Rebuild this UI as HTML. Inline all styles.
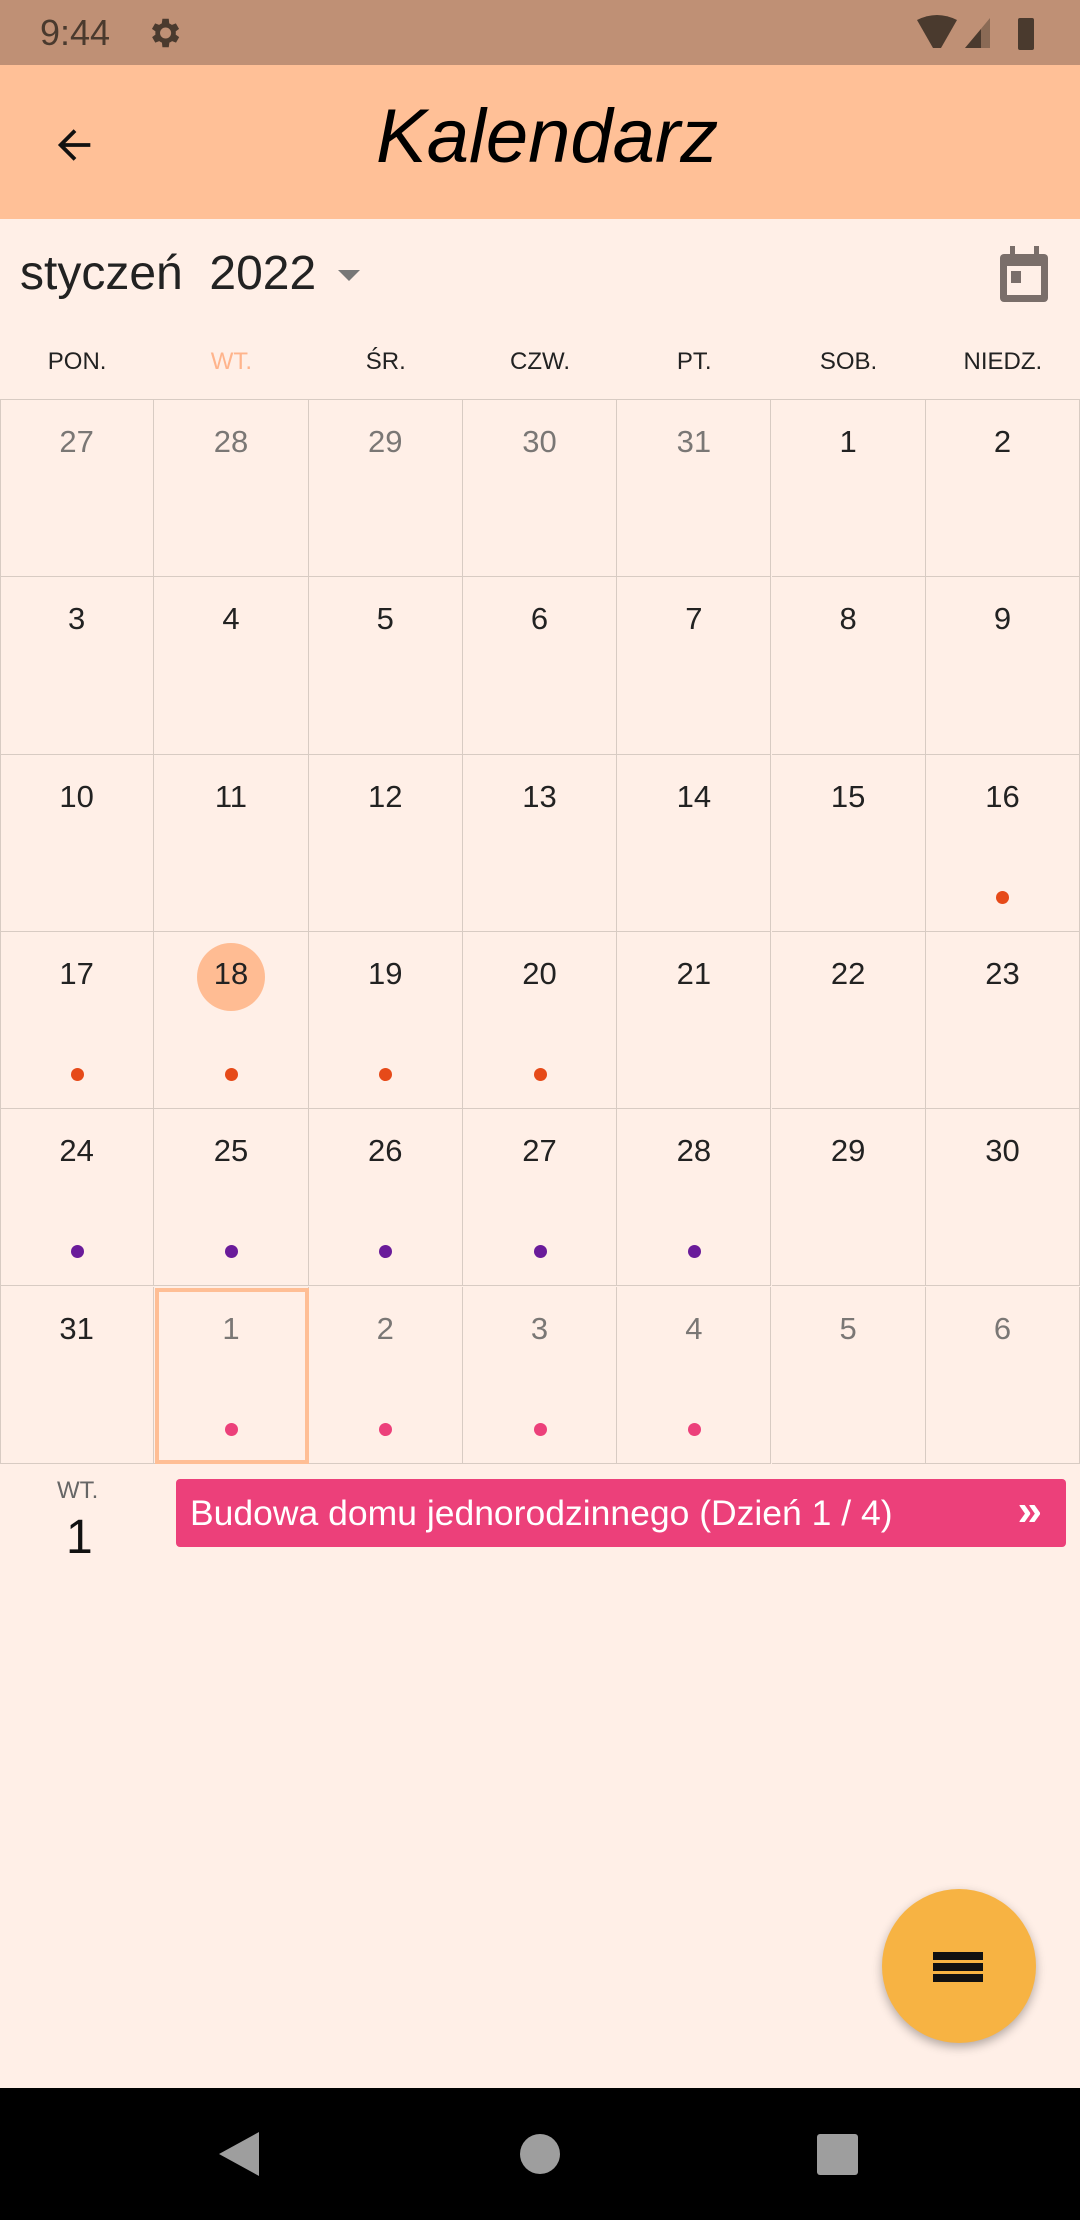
<!DOCTYPE html>
<html><head><meta charset="utf-8"><style>
*{margin:0;padding:0;box-sizing:border-box}
body{width:1080px;height:2220px;background:#FFEFE7;font-family:"Liberation Sans",sans-serif;position:relative;overflow:hidden}
.abs{position:absolute}
#sb{left:0;top:0;width:1080px;height:65px;background:#BF9075}
#ab{left:0;top:65px;width:1080px;height:154px;background:#FFC097}
.cell{position:absolute;width:154.3px;height:177.3px;border-right:1px solid #d8cbc3;border-bottom:1px solid #d8cbc3;text-align:center}
.num{position:absolute;left:0;right:0;top:24px;font-size:31px;color:#222}
.g{color:#7a7775}
.dot{position:absolute;left:50%;top:136px;width:13px;height:13px;margin-left:-6px;border-radius:50%}
.wd{position:absolute;top:348px;width:154.3px;text-align:center;font-size:24px;color:#222}
</style></head><body>
<div id="sb" class="abs">
<div class="abs" style="left:40px;top:12px;font-size:36px;color:#4a3a2e">9:44</div>
<svg class="abs" style="left:145px;top:14px" width="38" height="38" viewBox="0 0 24 24"><path fill="#4a3a2e" d="M19.4 13a7.5 7.5 0 0 0 0-2l2.1-1.6-2-3.5-2.5 1a7 7 0 0 0-1.7-1L15 3h-4l-.4 2.9a7 7 0 0 0-1.7 1l-2.5-1-2 3.5L6.6 11a7.5 7.5 0 0 0 0 2l-2.1 1.6 2 3.5 2.5-1a7 7 0 0 0 1.7 1L11 21h4l.4-2.9a7 7 0 0 0 1.7-1l2.5 1 2-3.5zM13 15.5a3.5 3.5 0 1 1 0-7 3.5 3.5 0 0 1 0 7z"/></svg>
<svg class="abs" style="left:915px;top:14px" width="130" height="38"><path d="M2 6 Q22 -4 42 6 L26 34 L18 34Z" fill="#4a3a2e"/><path d="M50 34 L75 4 L75 34Z" fill="#8a6a55"/><path d="M50 34 L66 15 L66 34Z" fill="#4a3a2e"/><rect x="103" y="4" width="16" height="32" rx="2" fill="#4a3a2e"/></svg>
</div>
<div id="ab" class="abs">
<svg class="abs" style="left:52px;top:57px" width="46" height="46" viewBox="0 0 24 24"><path d="M20 12H5M12 4.5L4.5 12 12 19.5" stroke="#111" stroke-width="2" fill="none"/></svg>
<div class="abs" style="left:376px;top:28px;font-size:76px;font-style:italic;font-family:'Comic Sans MS','Liberation Sans',sans-serif;color:#000">Kalendarz</div>
</div>
<div class="abs" style="left:20px;top:246px;font-size:48px;color:#222">styczeń&nbsp; 2022</div>
<div class="abs" style="left:338px;top:270px;width:0;height:0;border-left:11px solid transparent;border-right:11px solid transparent;border-top:11px solid #777"></div>
<svg class="abs" style="left:998px;top:244px" width="54" height="60" viewBox="0 0 54 60"><rect x="2" y="10" width="48" height="48" rx="4" fill="#7a6e6a"/><rect x="9" y="22" width="34" height="29" fill="#FFEFE7"/><rect x="12" y="2" width="5" height="10" fill="#7a6e6a"/><rect x="36" y="2" width="5" height="10" fill="#7a6e6a"/><rect x="13" y="27" width="10" height="12" fill="#7a6e6a"/></svg>
<div class="wd" style="left:0">PON.</div><div class="wd" style="left:154.3px;color:#FFB48C">WT.</div><div class="wd" style="left:308.6px">ŚR.</div><div class="wd" style="left:462.9px">CZW.</div><div class="wd" style="left:617.1px">PT.</div><div class="wd" style="left:771.4px">SOB.</div><div class="wd" style="left:925.7px">NIEDZ.</div>
<div class="abs" style="left:0;top:399px;width:1080px;height:1px;background:#d8cbc3"></div>
<div class="abs" style="left:0;top:399px;width:1px;height:1065px;background:#d8cbc3"></div>
<div id="grid"></div>
<div class="abs" style="left:155px;top:1288px;width:154px;height:176px;border:4px solid #FFBE95"></div>
<div class="abs" style="left:57px;top:1477px;font-size:24px;color:#666">WT.</div>
<div class="abs" style="left:66px;top:1510px;font-size:48px;color:#111">1</div>
<div class="abs" style="left:176px;top:1479px;width:890px;height:68px;background:#EC407A;border-radius:4px;color:#fff;font-size:35.5px;line-height:68px;padding-left:14px">Budowa domu jednorodzinnego (Dzień 1 / 4)<span style="position:absolute;right:24px;top:-2px;font-size:44px;font-weight:bold">»</span></div>
<div class="abs" style="left:882px;top:1889px;width:154px;height:154px;border-radius:50%;background:#F7B343;box-shadow:0 4px 10px rgba(0,0,0,.3)"></div>
<div class="abs" style="left:933px;top:1952px;width:50px;height:8px;background:#111"></div>
<div class="abs" style="left:933px;top:1963px;width:50px;height:8px;background:#111"></div>
<div class="abs" style="left:933px;top:1974px;width:50px;height:8px;background:#111"></div>
<div class="abs" style="left:0;top:2088px;width:1080px;height:132px;background:#000"></div>
<svg class="abs" style="left:215px;top:2130px" width="45" height="48"><path d="M44 2 L44 46 L4 24Z" fill="#9e9e9e"/></svg>
<div class="abs" style="left:520px;top:2134px;width:40px;height:40px;border-radius:50%;background:#9e9e9e"></div>
<div class="abs" style="left:817px;top:2134px;width:41px;height:41px;border-radius:3px;background:#9e9e9e"></div>
<script>
var rows=[[27,28,29,30,31,1,2],[3,4,5,6,7,8,9],[10,11,12,13,14,15,16],[17,18,19,20,21,22,23],[24,25,26,27,28,29,30],[31,1,2,3,4,5,6]];
var dots={"2-6":"#E64A19","3-0":"#E64A19","3-1":"#E64A19","3-2":"#E64A19","3-3":"#E64A19","4-0":"#6A1B9A","4-1":"#6A1B9A","4-2":"#6A1B9A","4-3":"#6A1B9A","4-4":"#6A1B9A","5-1":"#EC407A","5-2":"#EC407A","5-3":"#EC407A","5-4":"#EC407A"};
var h="";
for(var r=0;r<6;r++)for(var c=0;c<7;c++){var g=(r==0&&c<5)||(r==5&&c>0);
h+='<div class="cell" style="left:'+(c*154.3)+'px;top:'+(400+r*177.3)+'px">';
if(r==3&&c==1)h+='<div style="position:absolute;left:50%;top:11px;width:68px;height:68px;margin-left:-34px;border-radius:50%;background:#FFBC93"></div>';
h+='<div class="num'+(g?' g':'')+'">'+rows[r][c]+'</div>';
var d=dots[r+"-"+c];if(d)h+='<div class="dot" style="background:'+d+'"></div>';
h+='</div>';}
document.getElementById("grid").innerHTML=h;
</script>
</body></html>
